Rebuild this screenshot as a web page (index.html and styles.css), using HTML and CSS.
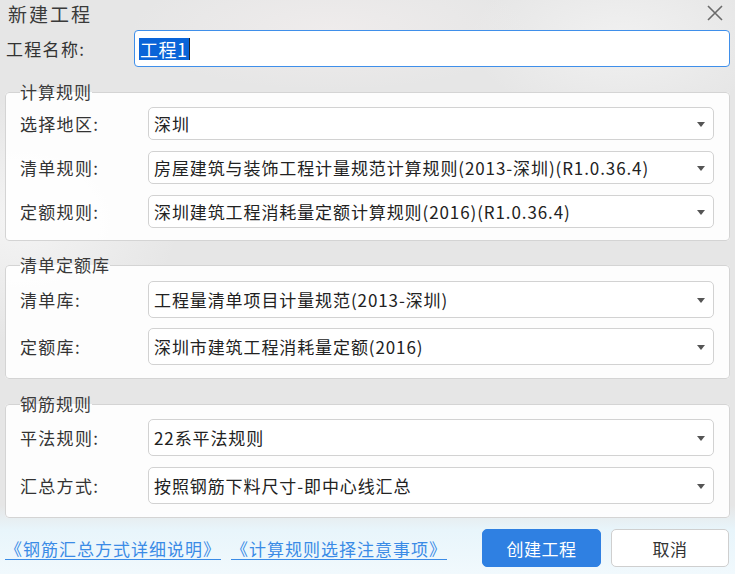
FILE: index.html
```html
<!DOCTYPE html>
<html lang="zh-CN">
<head>
<meta charset="utf-8">
<title>新建工程</title>
<link rel="stylesheet" href="styles.css">
</head>
<body>
<div class="dialog">
  <div class="titlebar">
    <span class="title">新建工程</span>
    <svg class="close" width="16" height="16" viewBox="0 0 16 16"><path d="M1 1L15 15M15 1L1 15" stroke="#6b6b6b" stroke-width="1.6" fill="none"/></svg>
  </div>
  <div class="name-row">
    <span class="name-label">工程名称:</span>
    <div class="name-input"><span class="sel">工程1</span><span class="caret"></span></div>
  </div>

  <fieldset class="group g1">
    <legend>计算规则</legend>
    <div class="row"><span class="label">选择地区:</span><div class="select"><span>深圳</span><i class="arrow"></i></div></div>
    <div class="row"><span class="label">清单规则:</span><div class="select"><span>房屋建筑与装饰工程计量规范计算规则(2013-深圳)(R1.0.36.4)</span><i class="arrow"></i></div></div>
    <div class="row"><span class="label">定额规则:</span><div class="select"><span>深圳建筑工程消耗量定额计算规则(2016)(R1.0.36.4)</span><i class="arrow"></i></div></div>
  </fieldset>

  <fieldset class="group g2">
    <legend>清单定额库</legend>
    <div class="row"><span class="label">清单库:</span><div class="select"><span>工程量清单项目计量规范(2013-深圳)</span><i class="arrow"></i></div></div>
    <div class="row"><span class="label">定额库:</span><div class="select"><span>深圳市建筑工程消耗量定额(2016)</span><i class="arrow"></i></div></div>
  </fieldset>

  <fieldset class="group g3">
    <legend>钢筋规则</legend>
    <div class="row"><span class="label">平法规则:</span><div class="select"><span>22系平法规则</span><i class="arrow"></i></div></div>
    <div class="row"><span class="label">汇总方式:</span><div class="select"><span>按照钢筋下料尺寸-即中心线汇总</span><i class="arrow"></i></div></div>
  </fieldset>

  <div class="footer">
    <a class="link" href="#">《钢筋汇总方式详细说明》</a>
    <a class="link second" href="#">《计算规则选择注意事项》</a>
    <span class="spacer"></span>
    <button class="btn primary">创建工程</button>
    <button class="btn">取消</button>
  </div>
</div>
</body>
</html>
```

FILE: styles.css
```css
* { box-sizing: border-box; }
html, body { margin: 0; padding: 0; }
body {
  width: 735px;
  height: 574px;
  overflow: hidden;
  font-family: "Noto Sans CJK SC", "Noto Sans", sans-serif;
  font-size: 17px;
  letter-spacing: 0.9px;
  color: #333;
  background:
    linear-gradient(180deg, rgba(233,245,251,0) 505px, #e8f5fb 530px, #f1f9fd 574px),
    radial-gradient(ellipse 160px 120px at 20px 220px, #f4f4f4, rgba(244,244,244,0) 100%),
    radial-gradient(ellipse 200px 60px at 330px 30px, #efecec, rgba(239,236,236,0) 100%),
    radial-gradient(ellipse 150px 80px at 620px 40px, #f1f1f1, rgba(241,241,241,0) 100%),
    #e6e6e6;
}
.dialog { padding: 0 5px 0 5px; }
.titlebar {
  height: 30px;
  display: flex;
  align-items: center;
  justify-content: space-between;
  padding: 0 7px 2px 3px;
}
.title { font-size: 19px; color: #3a3a3a; letter-spacing: 2px; line-height: 30px; }
.close { display: block; margin-top: -2px; }

.name-row { display: flex; align-items: center; height: 37px; }
.name-label { width: 129px; padding-left: 1px; color: #333; letter-spacing: 1.3px; }
.name-input {
  flex: 1;
  height: 37px;
  background: #fff;
  border: 1.5px solid #3f8fea;
  border-radius: 4px;
  display: flex;
  align-items: center;
  padding-left: 4px;
}
.sel {
  background: #0a64d8;
  color: #fff;
  font-size: 18px;
  line-height: 22px;
  padding: 0 1px;
  letter-spacing: 0.5px;
}
.caret { width: 1px; height: 22px; background: #222; }

.group {
  margin: 15px 0 0 0;
  border: 1px solid #d4d4d4;
  border-radius: 4px;
  background: rgba(255,255,255,0.9);
  padding: 5px 15px 12px 14px;
  min-width: 0;
}
.group legend {
  padding: 0;
  line-height: 20px;
  font-size: 17px;
  color: #3a3a3a;
  letter-spacing: 1px;
}
.g2 { margin-top: 14px; padding: 6px 15px 13px 14px; }
.g3 { margin-top: 15px; padding: 5px 15px 13px 14px; }
.row { display: flex; align-items: center; }
.g1 .row + .row { margin-top: 11px; }
.g2 .row + .row { margin-top: 10px; }
.g3 .row + .row { margin-top: 11px; }
.label { width: 128px; color: #333; letter-spacing: 1.3px; }
.select {
  flex: 1;
  height: 33px;
  background: #fff;
  border: 1px solid #d2d2d2;
  border-radius: 5px;
  display: flex;
  align-items: center;
  justify-content: space-between;
  padding: 0 8px 0 5px;
  color: #222;
}
.g2 .select, .g3 .select { height: 37px; }
.arrow {
  width: 0; height: 0;
  border-left: 4px solid transparent;
  border-right: 4px solid transparent;
  border-top: 5px solid #555;
  margin-top: 2px;
}

.footer {
  display: flex;
  align-items: center;
  margin-top: 11px;
  height: 38px;
}
.link {
  color: #3a8be6;
  text-decoration: underline;
  text-underline-offset: 3px;
  font-size: 17px;
  letter-spacing: 1px;
}
.second { margin-left: 10px; }
.spacer { flex: 1; }
.btn {
  font-family: inherit;
  font-size: 17px;
  letter-spacing: 0.5px;
  width: 118px;
  height: 38px;
  border-radius: 5px;
  border: 1px solid #cfcfcf;
  background: #fff;
  color: #333;
  margin-left: 10px;
  padding: 0;
}
.btn.primary {
  width: 119px;
  background: #2f80e2;
  border-color: #2f80e2;
  color: #fff;
  margin-left: 0;
}
.btn:last-child { margin-right: 1px; }
```
